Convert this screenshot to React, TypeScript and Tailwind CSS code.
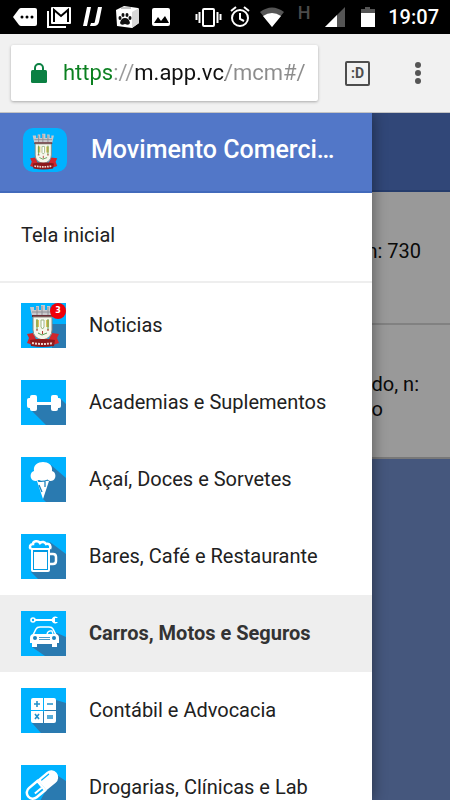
import { ReactNode } from "react";

const Crest = () => (
  <g>
    <path d="M9 4h4v3h2V3h3v4h2V2h4v5h2V3h3v4h2V4h3l-2 9H11z" fill="#c9c9cc" />
    <path d="M11 9h21M16 4v8M21 3v9M27 4v8" stroke="#8e8e94" fill="none" />
    <path d="M11 12h21v2H11z" fill="#6b3038" />
    <path d="M6 31l6-1 3 6h13l3-6 7 1-2 4 2 5-6 2H12l-6-2 2-5z" fill="#d1262b" />
    <path d="M12 14h19v13q0 8-9.500 10Q12 35 12 27z" fill="#f6f7ec" stroke="#8b887e" />
    <path d="M15 17h3v7h-3zM25 17h3v7h-3z" fill="#dcc25a" />
    <path d="M16 16v11M27 16v11M17 30l4 2 5-2" stroke="#5c9a52" fill="none" />
    <path d="M20 17h3v7l-1.500 2-1.500-2z" fill="#fff" stroke="#9db584" />
    <path d="M21.500 28v3M15 27h2M26 27h2" stroke="#b3362d" />
    <path d="M9 37q12.500-2 25 0l-1 6q-11.500 2-23 0z" fill="#8c181b" />
    <path d="M11 40q10.500 2 21 0" stroke="#f0d6d0" strokeWidth="2" strokeDasharray="2 1" fill="none" />
  </g>
);

const Tile = ({ children, shadow }: { children: ReactNode; shadow: string }) => (
  <svg viewBox="0 0 45 45" className="h-[45px] w-[45px] shrink-0 bg-[#00b2ff]" aria-hidden="true">
    <path d={shadow} fill="#2a7ab0" />
    {children}
  </svg>
);

const NewsIcon = () => (
  <Tile shadow="M31 21h14v24H31z">
    <Crest />
  </Tile>
);

const GymIcon = () => (
  <Tile shadow="M39 18l6 6v21H25L11 31l3-8h24z">
    <g fill="#fff">
      <rect x="9" y="15" width="7" height="16" rx="2" />
      <rect x="30" y="15" width="7" height="16" rx="2" />
      <rect x="6" y="18" width="5" height="10" rx="2" />
      <rect x="35" y="18" width="5" height="10" rx="2" />
      <rect x="15" y="22" width="16" height="3" />
    </g>
  </Tile>
);

const IceCreamIcon = () => (
  <Tile shadow="M30 8l15 13v24H25l-3-3z">
    <path
      d="M13 14C12 8 17 5 22 5s10 3 9 9c3 1 4 4 3 7-1 3-5 4-7 2-3 2-6 2-9 0-3 2-7 1-8-2-1-3 0-6 3-7z"
      fill="#fff"
    />
    <path d="M16 24h12l-6 18z" fill="#fff" />
    <path d="M17 24q5 1 10-1M24 24v6M18 28l3 7" stroke="#1b83bf" fill="none" strokeWidth="1.3" />
  </Tile>
);

const BeerIcon = () => (
  <Tile shadow="M29 8l16 12v25H17l-7-7z">
    <rect x="11" y="14" width="17" height="23" rx="1" fill="#009be4" stroke="#fff" strokeWidth="2" />
    <rect x="13" y="18" width="13" height="17" fill="#fff" />
    <path d="M28 20h4q3 0 3 3v4q0 3-3 3h-4" fill="none" stroke="#fff" strokeWidth="2.5" />
    <path
      d="M10 15c-2-2-1-5 2-5 0-3 5-4 7-1 2-2 5-1 6 1 4-1 5 2 4 5"
      fill="#00b2ff"
      stroke="#fff"
      strokeWidth="2.5"
    />
    <path d="M10 15h19" stroke="#fff" strokeWidth="2" />
  </Tile>
);

const CarIcon = () => (
  <Tile shadow="M36 22l9 4v19H24L11 36z">
    <path d="M13 9h19" stroke="#fff" strokeWidth="2" />
    <circle cx="12" cy="9" r="2" fill="none" stroke="#fff" strokeWidth="1.6" />
    <path d="M37 7a3.500 3.500 0 1 0 0 4h-3V7z" fill="#fff" />
    <path d="M12 24l3-6q1-2 4-2h9q3 0 4 2l3 6" fill="none" stroke="#fff" strokeWidth="1.6" />
    <path d="M26 23q1-4 5-3l1 3" fill="none" stroke="#fff" strokeWidth="1.3" />
    <path d="M9 27q0-4 4-4h21q4 0 4 4v5h-2v4h-5v-3H16v3h-5v-4H9z" fill="#fff" />
    <circle cx="14" cy="27" r="2" fill="#1b83bf" />
    <circle cx="33" cy="27" r="2" fill="#1b83bf" />
    <path d="M18 26.500h11M18 28.500h11" stroke="#1b83bf" strokeWidth=".8" />
  </Tile>
);

const CalculatorIcon = () => (
  <Tile shadow="M35 12l10 3v30H20L11 35z">
    <path
      d="M12 10h10v12H10V12q0-2 2-2zM23 10h10q2 0 2 2v10H23zM10 23h12v12H12q-2 0-2-2zM23 23h12v10q0 2-2 2H23z"
      fill="#fff"
    />
    <g stroke="#2291cc" strokeWidth="1.6" fill="none">
      <path d="M13 16h6M16 13v6M26 16h6M26 28h6M26 30h6" />
      <path d="M14 26l4 5M18 26l-4 5" />
    </g>
  </Tile>
);

const PillIcon = () => (
  <Tile shadow="M34 9l11 7v29H14z">
    <g transform="rotate(-40 21 20)">
      <path d="M21 13h12a7 7 0 0 1 0 14H21z" fill="#fff" />
      <path d="M20 14H9a6 6 0 0 0 0 12h11z" fill="#00b2ff" stroke="#fff" strokeWidth="2.5" />
      <path d="M10 22h9" stroke="#fff" strokeWidth="2" />
      <path d="M24 16h9" stroke="#00b2ff" strokeWidth="1.2" strokeLinecap="round" />
    </g>
  </Tile>
);

const categories = [
  { name: "Noticias", icon: <NewsIcon />, badge: 3 },
  { name: "Academias e Suplementos", icon: <GymIcon /> },
  { name: "Açaí, Doces e Sorvetes", icon: <IceCreamIcon /> },
  { name: "Bares, Café e Restaurante", icon: <BeerIcon /> },
  { name: "Carros, Motos e Seguros", icon: <CarIcon />, active: true },
  { name: "Contábil e Advocacia", icon: <CalculatorIcon /> },
  { name: "Drogarias, Clínicas e Lab", icon: <PillIcon /> },
];

const StatusIcon = ({ children }: { children: ReactNode }) => (
  <svg viewBox="0 0 24 24" className="h-6 w-6 shrink-0 overflow-visible" fill="#fff" aria-hidden="true">
    {children}
  </svg>
);

const StatusBar = () => (
  <div className="flex h-[34px] shrink-0 items-center justify-between bg-black pr-[11px] pl-[13px] text-white">
    <div className="flex items-center gap-[10px]">
      <StatusIcon>
        <path d="M0 12l6-8q1-1 2-1h14q2 0 2 2v14q0 2-2 2H8q-1 0-2-1z" />
        <g fill="#000">
          <circle cx="9" cy="12" r="1.5" />
          <circle cx="14" cy="12" r="1.5" />
          <circle cx="19" cy="12" r="1.5" />
        </g>
      </StatusIcon>
      <StatusIcon>
        <path d="M1 6v16h18" fill="none" stroke="#fff" strokeWidth="2" />
        <path d="M5 2h18q1 0 1 1v15q0 1-1 1H5q-1 0-1-1V3q0-1 1-1z" />
        <path d="M7 17V5l7 6 7-6v12" fill="none" stroke="#000" strokeWidth="2" />
      </StatusIcon>
      <StatusIcon>
        <path d="M6 2h4L6 21H2zM17 2h4l-3 15q-1 4-5 4h-4l1-3h3q1 0 1-2z" />
      </StatusIcon>
      <StatusIcon>
        <path d="M1 5l8-4 14 2 1 15-7 5L2 21z" />
        <path d="M17 7l7-4v15l-7 5z" fill="#d8d8d8" />
        <path d="M6 3h10" stroke="#888" />
        <g fill="#111">
          <ellipse cx="5" cy="13" rx="1.5" ry="2" />
          <ellipse cx="8" cy="10" rx="1.5" ry="2" />
          <ellipse cx="12" cy="10" rx="1.5" ry="2" />
          <ellipse cx="15" cy="13" rx="1.5" ry="2" />
          <path d="M5 18q1-5 5-5t5 5q-1 3-5 1-4 2-5-1z" />
        </g>
      </StatusIcon>
      <StatusIcon>
        <rect x="3" y="3" width="18" height="18" rx="2" />
        <path d="M5 18l4-6 3 4 4-5 4 7z" fill="#000" />
      </StatusIcon>
    </div>
    <div className="flex items-center gap-2">
      <StatusIcon>
        <rect x="7" y="4" width="11" height="17" rx="1" fill="none" stroke="#fff" strokeWidth="2" />
        <path d="M3.5 7v11M.5 9v6M21.5 7v11M24.5 9v6" stroke="#fff" strokeWidth="2" />
      </StatusIcon>
      <StatusIcon>
        <g fill="none" stroke="#fff" strokeWidth="2">
          <circle cx="12" cy="13" r="8" />
          <path d="M12 8v6l4 2M3 6l5-4M21 6l-5-4" />
        </g>
      </StatusIcon>
      <StatusIcon>
        <path d="M0 7q12-9 24 0L12 22z" fill="#555" />
        <path d="M3 11q9-6 18 0l-9 11z" />
      </StatusIcon>
      <span className="-mt-2 w-6 text-center text-lg leading-4 font-medium text-[#4a4a4a]">H</span>
      <StatusIcon>
        <path d="M21 2v20H1z" fill="#555" />
        <path d="M13 10v12H1z" />
      </StatusIcon>
      <StatusIcon>
        <path d="M9 2h5v2h5v5H5V4h4z" fill="#555" />
        <path d="M5 8h14v14H5z" />
      </StatusIcon>
      <time className="text-xl leading-6 font-medium">19:07</time>
    </div>
  </div>
);

const BrowserBar = () => (
  <div className="flex h-[79px] shrink-0 items-center border-b border-[#c4c4c4] bg-[#f1f1f1] pl-[11px]">
    <div className="flex h-[56px] min-w-0 flex-1 items-center gap-4 rounded-xs bg-white pr-3 pl-5 shadow-[0_1px_3px_rgba(0,0,0,0.3)]">
      <svg viewBox="0 0 16 20" className="h-5 w-4 shrink-0" aria-hidden="true">
        <path d="M4 8V5a4 4 0 0 1 8 0v3" fill="none" stroke="#0b8043" strokeWidth="2" />
        <rect x="0" y="7" width="16" height="13" rx="1.5" fill="#0b8043" />
      </svg>
      <input
        type="text"
        aria-label="Endereço"
        defaultValue="https://m.app.vc/mcm#/"
        className="w-full min-w-0 bg-[linear-gradient(90deg,#0b8020_50px,#999_50px,#999_72px,#111_72px,#111_162px,#8c8c8c_162px)] bg-clip-text text-[22px] leading-8 text-transparent outline-none"
      />
    </div>
    <button type="button" aria-label="Abas abertas" className="ml-[27px] flex h-[25px] w-[25px] shrink-0 items-center justify-center rounded-xs border-2 border-[#4d4d4d] text-sm leading-4 font-bold text-[#4d4d4d]">
      :D
    </button>
    <button type="button" aria-label="Mais opções" className="mr-5 ml-9 shrink-0">
      <svg viewBox="0 0 24 24" className="h-6 w-6" fill="#555">
        <circle cx="12" cy="4" r="3" />
        <circle cx="12" cy="12" r="3" />
        <circle cx="12" cy="20" r="3" />
      </svg>
    </button>
  </div>
);

const Drawer = () => (
  <aside className="absolute inset-y-0 left-0 flex w-[372px] max-w-full flex-col overflow-hidden bg-white shadow-[0_0_14px_rgba(0,0,0,0.45)]">
    <header className="flex h-[80px] shrink-0 items-center gap-6 border-b-2 border-[#426abb] bg-[#5277c8] pr-8 pb-1 pl-[23px]">
      <svg viewBox="0 0 44 44" className="h-11 w-11 shrink-0 rounded-[10px] bg-[#00b2ff]" role="img" aria-label="Brasão">
        <g transform="translate(2 4) scale(.85)">
          <Crest />
        </g>
      </svg>
      <h1 className="truncate text-[25px] leading-8 font-medium text-white">Movimento Comerci…</h1>
    </header>
    <nav className="text-xl leading-7 text-[#212121]">
      <a href="#inicio" className="flex h-[90px] items-center border-b-2 border-[#eee] px-[21px] pb-1">
        Tela inicial
      </a>
      <ul className="pt-1">
        {categories.map(({ name, icon, badge, active }) => (
          <li key={name}>
            <a
              href="#categoria"
              aria-current={active ? "page" : undefined}
              className={
                active
                  ? "flex h-[77px] items-center gap-[23px] bg-[#eee] px-[21px] font-bold text-[#333]"
                  : "flex h-[77px] items-center gap-[23px] px-[21px]"
              }
            >
              <span className="relative shrink-0">
                {icon}
                {badge && (
                  <span className="absolute top-0 right-0 h-4 w-4 rounded-full bg-[#f00008] text-center font-['DejaVu_Sans'] text-[8px] leading-4 font-bold text-white">
                    {badge}
                  </span>
                )}
              </span>
              <span className="pb-0.5 whitespace-nowrap">{name}</span>
            </a>
          </li>
        ))}
      </ul>
    </nav>
  </aside>
);

export default function App() {
  return (
    <div className="flex h-screen flex-col overflow-hidden font-[Roboto,sans-serif]">
      <StatusBar />
      <BrowserBar />
      <div className="relative min-h-0 flex-1 overflow-hidden bg-[#7392d0]">
        <div className="h-[79px] border-b-2 border-[#3f64b4] bg-[#5277c8]" />
        <main className="bg-white text-right text-xl leading-[25px] text-[#111]">
          <div className="h-[133px] border-b-2 border-[#d8d8d8] pt-[47px] pr-[29px]">
            <p>n: 730</p>
          </div>
          <div className="h-[134px] border-b-2 border-[#c8c8c8] pt-[47px]">
            <p className="pr-[31px]">ado, n:</p>
            <p className="pr-[67px]">to</p>
          </div>
        </main>
        <button type="button" aria-label="Fechar menu" className="absolute inset-0 bg-black/40" />
        <Drawer />
      </div>
    </div>
  );
}
